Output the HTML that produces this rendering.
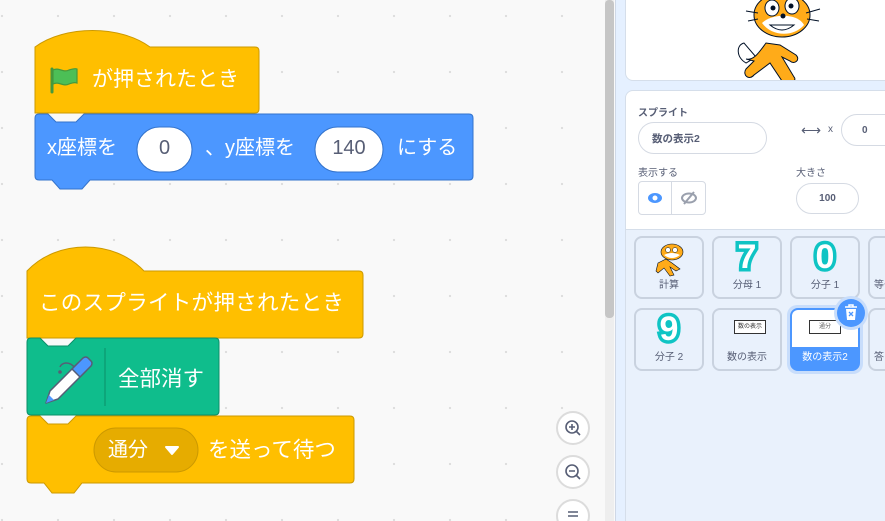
<!DOCTYPE html>
<html><head><meta charset="utf-8"><style>
*{margin:0;padding:0;box-sizing:border-box}
html,body{width:885px;height:521px;overflow:hidden}
body{position:relative;font-family:"Liberation Sans","Noto Sans CJK JP",sans-serif;background:#f9f9f9}
#ws{position:absolute;left:0;top:0;width:615px;height:521px;background-color:#f9f9f9;background-image:radial-gradient(circle,#dcdcdc 1px,transparent 1.3px);background-size:56px 56px;background-position:-26px -12px}
.abs{position:absolute}
.t{position:absolute;height:30px;line-height:30px;white-space:nowrap}
#panel{position:absolute;left:615px;top:0;width:270px;height:521px;background:#e5f0ff;border-left:1px solid #cfd8e6}
.card{position:absolute;background:#fff;border:1px solid #d5deea;border-radius:8px}
.lbl{position:absolute;font-size:10px;color:#575e75}
.inp{position:absolute;border:1px solid #d5dae3;border-radius:16px;background:#fff;font-size:10px;color:#575e75;display:flex;align-items:center}
.tile{position:absolute;width:70px;height:63px;border:2px solid #c9d2df;border-radius:8px;background:#e9f1fc;font-size:10px;color:#575e75;text-align:center}
.tile .n{position:absolute;left:0;right:0;bottom:6px}
.num{position:absolute;left:0;right:0;top:0px;font:bold 34px "Liberation Sans",sans-serif;color:#fff;-webkit-text-stroke:7px #0fc4c4;paint-order:stroke fill}
</style></head><body>
<div id="ws"></div>
<svg class="abs" style="left:0;top:0" width="615" height="521">
<path d="M35,47 c30,-22 85,-22 115,0 H255 q4,0 4,4 V109 q0,4 -4,4 H35 Z" fill="#ffbf00" stroke="#cc9900"/>
<path d="M35,118 q0,-4 4,-4 H48 l8,8 h20 l8,-8 H469 q4,0 4,4 V176 q0,4 -4,4 H90 l-8,9 h-22 l-8,-9 H39 q-4,0 -4,-4 Z" fill="#4c97ff" stroke="#3373cc"/>
<rect x="137" y="127" width="55" height="45" rx="22.5" fill="#fff" stroke="#3373cc"/>
<rect x="315" y="127" width="68" height="45" rx="22.5" fill="#fff" stroke="#3373cc"/>
<path d="M52,69 v23" stroke="#45993d" stroke-width="3" stroke-linecap="round"/>
<path d="M53,70 c6,-3 10,3 16,0 c3,-1 6,-2 8,-1 v14 c-3,-1 -5,0 -8,1 c-6,3 -10,-3 -16,0 Z" fill="#4cbf56" stroke="#45993d" stroke-width="1.2"/>
<path d="M27,271 c30,-32 87,-32 117,0 H359 q4,0 4,4 V334 q0,4 -4,4 H27 Z" fill="#ffbf00" stroke="#cc9900"/>
<path d="M27,342 q0,-4 4,-4 H40 l8,8 h20 l8,-8 H215 q4,0 4,4 V411 q0,4 -4,4 H31 q-4,0 -4,-4 Z" fill="#0fbd8c" stroke="#0b8e69"/>
<line x1="105" y1="348" x2="105" y2="406" stroke="#0b8e69"/>
<path d="M75,368 c-6,-8 -14,-5 -15,-1" fill="none" stroke="#575e75" stroke-width="1.5"/>
<circle cx="60" cy="372" r="1.8" fill="#575e75"/>
<path d="M46,403 l4,-12 l28,-28 l8,8 l-28,28 Z" fill="#fff" stroke="#575e75" stroke-width="1.5" stroke-linejoin="round"/>
<path d="M72,369 l11,-11 q3,-2 5,0 l3,3 q2,2 0,5 l-11,11 Z" fill="#4c97ff" stroke="#575e75" stroke-width="1.5" stroke-linejoin="round"/>
<path d="M46,403 l3,-8 l5,5 Z" fill="#4c97ff"/>
<path d="M27,420 q0,-4 4,-4 H40 l8,8 h20 l8,-8 H350 q4,0 4,4 V479 q0,4 -4,4 H82 l-8,10 h-22 l-8,-10 H31 q-4,0 -4,-4 Z" fill="#ffbf00" stroke="#cc9900"/>
<rect x="94" y="428" width="104" height="44" rx="22" fill="#e6ac00" stroke="#cc9900"/>
<path d="M166,447 h12 l-6,7 Z" fill="#fff" stroke="#fff" stroke-width="2" stroke-linejoin="round"/>
<g fill="#fff" stroke="#dcdcdc" stroke-width="2">
<circle cx="573" cy="428" r="16"/><circle cx="573" cy="472" r="16"/><circle cx="573" cy="516" r="16"/></g>
<g fill="none" stroke="#575e75" stroke-width="1.6">
<circle cx="572" cy="427" r="6"/><path d="M576,431 l4,4 M569,427 h6 M572,424 v6"/>
<circle cx="572" cy="471" r="6"/><path d="M576,475 l4,4 M569,471 h6"/>
<path d="M568,512 h10 M568,516 h10"/></g>
<rect x="605" y="0" width="9" height="521" fill="#eeeeee"/>
<rect x="605" y="0" width="9" height="318" rx="4" fill="#c6c6c6"/>
</svg>
<div class="t" style="left:47px;top:133px;font-size:20px;color:#fff">x座標を</div>
<div class="t" style="left:137px;top:133px;width:55px;text-align:center;font-size:20px;color:#575e75">0</div>
<div class="t" style="left:205px;top:133px;font-size:20px;color:#fff">、y座標を</div>
<div class="t" style="left:315px;top:133px;width:68px;text-align:center;font-size:20px;color:#575e75">140</div>
<div class="t" style="left:397px;top:133px;font-size:20px;color:#fff">にする</div>
<div class="t" style="left:92px;top:65px;font-size:21px;color:#fff">が押されたとき</div>
<div class="t" style="left:39px;top:288px;font-size:21.5px;color:#fff;letter-spacing:0.3px">このスプライトが押されたとき</div>
<div class="t" style="left:118px;top:364px;font-size:21.5px;color:#fff">全部消す</div>
<div class="t" style="left:108px;top:435px;font-size:20px;color:#fff">通分</div>
<div class="t" style="left:208px;top:435px;font-size:21.5px;color:#fff">を送って待つ</div>

<div id="panel">
<div class="card" style="left:9px;top:-10px;width:270px;height:91px;overflow:hidden">
<svg class="abs" style="left:98px;top:6px" width="110" height="86" viewBox="0 0 110 86">
<path d="M20,46 c-8,2 -8,14 2,20 l10,-6 Z" fill="#fff" stroke="#001026" stroke-width="1"/>
<path d="M22,62 c8,2 14,-8 20,-16 l14,2 l16,10 c5,5 -2,10 -6,6 l-8,-4 l12,20 c4,4 -6,8 -12,4 l-12,-18 l-16,12 c-5,6 -12,0 -8,-6 l8,-8 Z" fill="#ffab19" stroke="#001026" stroke-width="1"/>
<ellipse cx="58" cy="18" rx="28" ry="22" fill="#ffab19" stroke="#001026" stroke-width="1"/>
<path d="M38,26 c10,14 32,14 42,2 c-6,-12 -32,-12 -42,-2 Z" fill="#fff"/>
<ellipse cx="48" cy="11" rx="7" ry="8" fill="#fff" stroke="#001026"/><ellipse cx="68" cy="9" rx="7" ry="8" fill="#fff" stroke="#001026"/>
<circle cx="49" cy="11" r="2.5" fill="#001026"/><circle cx="67" cy="9" r="2.5" fill="#001026"/>
<path d="M46,28 q12,10 24,0 Z" fill="#fff" stroke="#001026"/>
<circle cx="59" cy="19" r="2.5" fill="#001026"/>
<path d="M82,16 l14,-4 M83,22 l12,2 M34,16 l-12,-2 M34,22 l-10,2" stroke="#001026"/>
</svg>
</div>
<div class="card" style="left:9px;top:90px;width:270px;height:140px;border-radius:8px 8px 0 0">
<div class="lbl" style="left:12px;top:13px;font-weight:bold">スプライト</div>
<div class="inp" style="left:12px;top:31px;width:129px;height:32px;padding-left:13px;font-weight:bold;font-size:10.5px">数の表示2</div>
<div class="lbl" style="left:175px;top:31px;font-size:14px;color:#575e75">⟷</div>
<div class="lbl" style="left:202px;top:33px">x</div>
<div class="inp" style="left:215px;top:23px;width:60px;height:32px;padding-left:20px;font-weight:bold">0</div>
<div class="lbl" style="left:12px;top:73px">表示する</div>
<div class="abs" style="left:12px;top:90px;width:68px;height:34px;border:1px solid #d5dae3;border-radius:4px;display:flex">
<div style="width:33px;border-right:1px solid #d5dae3;display:flex;align-items:center;justify-content:center"><svg width="16" height="12"><ellipse cx="8" cy="6" rx="7" ry="5" fill="#4c97ff"/><circle cx="8" cy="6" r="2.5" fill="#fff"/></svg></div>
<div style="flex:1;display:flex;align-items:center;justify-content:center"><svg width="16" height="14"><ellipse cx="8" cy="7" rx="7" ry="4.5" fill="none" stroke="#9aa0ad" stroke-width="2"/><path d="M3,13 L13,1" stroke="#9aa0ad" stroke-width="2"/></svg></div>
</div>
<div class="lbl" style="left:170px;top:73px">大きさ</div>
<div class="inp" style="left:170px;top:92px;width:63px;height:31px;justify-content:center;font-weight:bold">100</div>
</div>
<div class="abs" style="left:9px;top:229px;width:270px;height:300px;background:#e9f1fc;border-left:1px solid #d5deea;border-top:1px solid #d5deea"></div>

<div class="tile" style="left:18px;top:236px"><svg class="abs" style="left:16px;top:3px" width="36" height="36" viewBox="0 0 36 36"><path d="M6,22 l8,-4 l6,4 l8,6 l-4,2 l-6,-4 l4,8 l-4,1 l-6,-8 l-6,5 l-2,-2 Z" fill="#ffab19" stroke="#001026" stroke-width=".6"/><ellipse cx="20" cy="11" rx="11" ry="8" fill="#ffab19" stroke="#001026" stroke-width=".6"/><path d="M12,14 q8,6 16,0 q-8,-4 -16,0Z" fill="#fff"/><circle cx="16" cy="9" r="2.5" fill="#fff" stroke="#001026" stroke-width=".5"/><circle cx="23" cy="9" r="2.5" fill="#fff" stroke="#001026" stroke-width=".5"/></svg><div class="n">計算</div></div>
<div class="tile" style="left:96px;top:236px"><div class="num">7</div><div class="n">分母 1</div></div>
<div class="tile" style="left:174px;top:236px"><div class="num">0</div><div class="n">分子 1</div></div>
<div class="tile" style="left:252px;top:236px"><div class="n" style="text-align:left;padding-left:4px">等号</div></div>
<div class="tile" style="left:18px;top:308px"><div class="num">9</div><div class="n">分子 2</div></div>
<div class="tile" style="left:96px;top:308px"><div class="abs" style="left:20px;top:10px;width:32px;height:14px;border:1px solid #333;background:#fff;font-size:6px;line-height:12px;color:#333">数の表示</div><div class="n">数の表示</div></div>
<div class="abs" style="left:171px;top:305px;width:76px;height:69px;border-radius:10px;background:#c8ddfb"></div>
<div class="tile" style="left:174px;top:308px;border-color:#4c97ff;background:#4c97ff;overflow:hidden"><div class="abs" style="left:0;top:0;right:0;height:37px;background:#fff"></div><div class="abs" style="left:17px;top:10px;width:32px;height:14px;border:1px solid #333;background:#fff;font-size:6px;line-height:12px;color:#666">通分</div><div class="n" style="color:#fff">数の表示2</div></div>
<div class="tile" style="left:252px;top:308px"><div class="n" style="text-align:left;padding-left:4px">答</div></div>
<div class="abs" style="left:221px;top:299px;width:28px;height:28px;border-radius:50%;background:#4c97ff;box-shadow:0 0 0 3px #c8ddfb"><svg class="abs" style="left:7px;top:5px" width="14" height="17"><path d="M1,3 h12 M5,3 v-2 h4 v2" stroke="#fff" stroke-width="1.5" fill="none"/><path d="M2,5 h10 l-1,11 h-8 Z" fill="#fff"/><path d="M5,8 l4,4 M9,8 l-4,4" stroke="#4c97ff" stroke-width="1.3"/></svg></div>
</div>
</body></html>
